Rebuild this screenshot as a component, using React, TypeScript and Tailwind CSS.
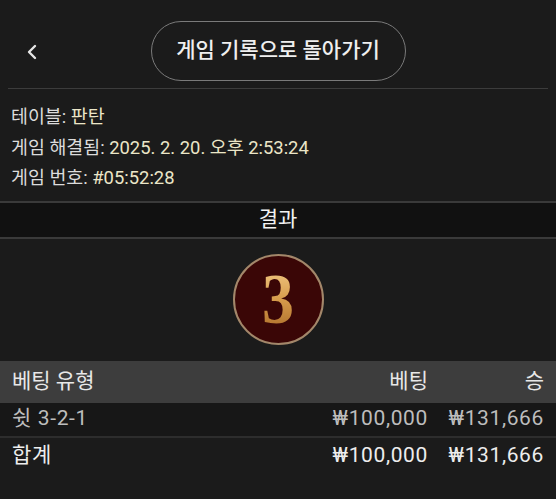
import { ChevronLeft } from "lucide-react";

const font = { fontFamily: 'Roboto, "Noto Sans CJK KR", sans-serif' };

function InfoLine({ label, value }: { label: string; value: string }) {
  return (
    <div className="h-[30.5px] flex items-center text-[18.4px] text-[#dcdcdc]">
      <span>{label}:&nbsp;</span>
      <span className="text-[#ebe6c8]">{value}</span>
    </div>
  );
}

export default function App() {
  return (
    <div
      className="w-[556px] h-[499px] bg-[#1b1b1b] text-white overflow-hidden"
      style={font}
    >
      {/* top bar */}
      <div className="mx-2 h-[89px] border-b border-[#3c3c3c] relative flex items-center justify-center">
        <button className="absolute left-[12px] top-[40px] text-[#e6e6e6]">
          <ChevronLeft size={24} strokeWidth={2.4} />
        </button>
        <div className="mt-[13px] w-[255px] h-[60px] rounded-full border border-[#7a7a7a] flex items-center justify-center text-[21px] font-medium text-[#efefef]">
          게임 기록으로 돌아가기
        </div>
      </div>

      {/* info */}
      <div className="pl-[11px] pt-[13px] pb-[7px]">
        <InfoLine label="테이블" value="판탄" />
        <InfoLine label="게임 해결됨" value="2025. 2. 20. 오후 2:53:24" />
        <InfoLine label="게임 번호" value="#05:52:28" />
      </div>

      {/* result */}
      <div className="border-y-2 border-[#3a3a3a] bg-[#111111] h-[38px] flex items-center justify-center text-[21px] text-[#f2f2f2]">
        결과
      </div>
      <div className="h-[122px] flex items-center justify-center">
        <div className="w-[91px] h-[91px] rounded-full border-2 border-[#a3876a] bg-[#3a0606] flex items-center justify-center">
          <span
            className="text-[64px] font-bold leading-none bg-gradient-to-b from-[#f4cf8a] via-[#d79c4c] to-[#a96a26] bg-clip-text text-transparent -mt-[2px] inline-block scale-y-[1.12]"
            style={{ fontFamily: '"Liberation Serif", serif' }}
          >
            3
          </span>
        </div>
      </div>

      {/* bets table */}
      <div className="text-[21px]">
        <div className="h-[42px] bg-[#3d3d3d] flex items-center px-[12px] text-[#e8e8e8]">
          <span className="flex-1">베팅 유형</span>
          <span className="w-[100px] text-right">베팅</span>
          <span className="w-[116px] text-right">승</span>
        </div>
        <div className="h-[35px] bg-[#171717] flex items-center px-[12px] text-[#bdbdbd] border-b-2 border-[#2d2d2d] tracking-[0.03em]">
          <span className="flex-1">쉿 3-2-1</span>
          <span className="w-[100px] text-right">₩100,000</span>
          <span className="w-[116px] text-right">₩131,666</span>
        </div>
        <div className="h-[37px] flex items-center px-[12px] text-[#ededed] tracking-[0.03em]">
          <span className="flex-1">합계</span>
          <span className="w-[100px] text-right">₩100,000</span>
          <span className="w-[116px] text-right">₩131,666</span>
        </div>
      </div>
    </div>
  );
}
